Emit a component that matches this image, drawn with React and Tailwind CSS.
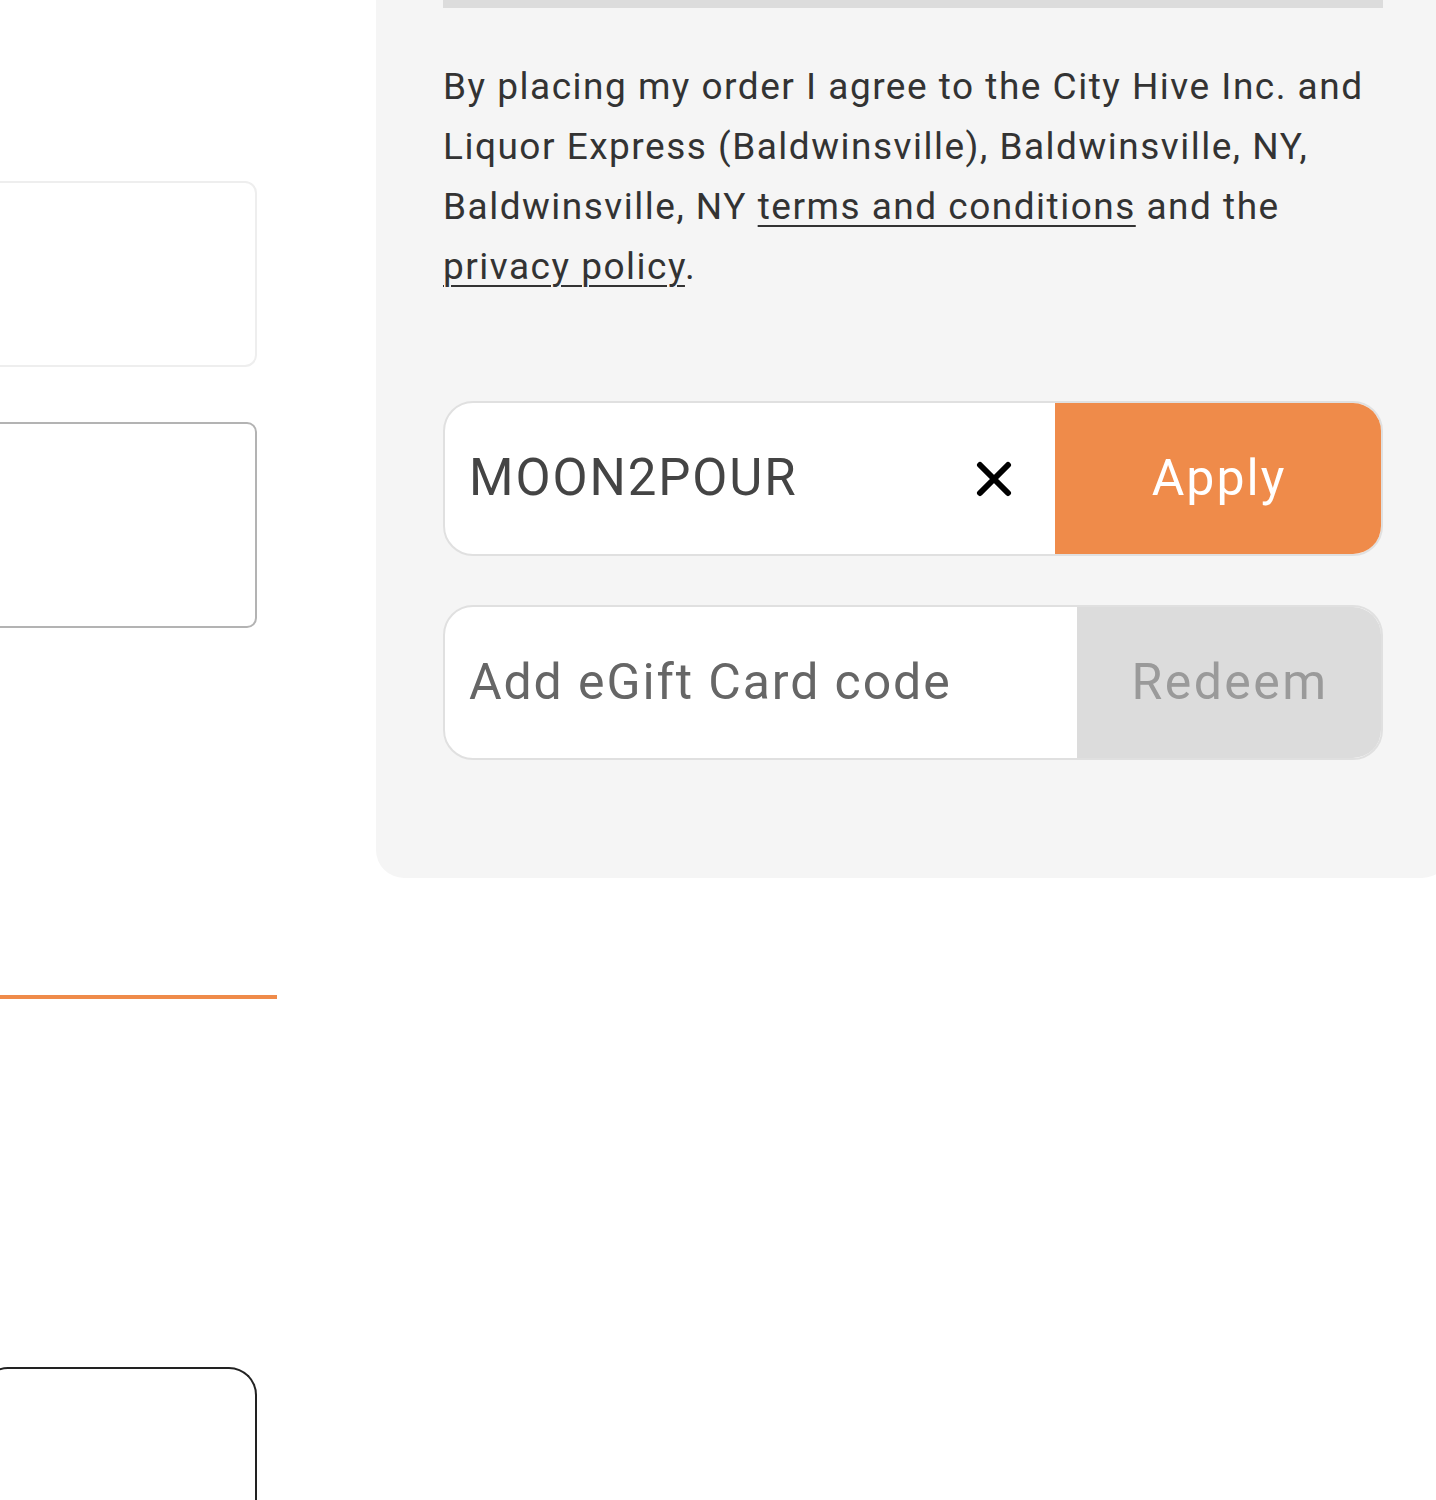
export default function App() {
  return (
    <div
      className="flex items-start w-[1436px] h-[1500px] overflow-hidden bg-white"
      style={{ fontFamily: 'Roboto, "Liberation Sans", sans-serif' }}
    >
      {/* left form column (cut off) */}
      <div className="w-[277px] shrink-0 flex flex-col">
        <div className="mt-[181px] ml-[-20px] w-[277px] h-[186px] rounded-[12px] border-2 border-[#eeeeee] bg-white" />
        <div className="mt-[55px] ml-[-20px] w-[277px] h-[206px] rounded-[10px] border-2 border-[#b3b3b3] bg-white" />
        <div className="mt-[367px] w-[277px] h-[4px] bg-[#ef8b4a]" />
        <div className="mt-[368px] ml-[-20px] w-[277px] h-[200px] rounded-t-[28px] border-2 border-b-0 border-[#222222] bg-white" />
      </div>

      {/* order summary panel */}
      <div className="ml-[99px] w-[1074px] shrink-0 bg-[#f5f5f5] rounded-b-[28px] px-[67px] pb-[118px]">
        <div className="h-[8px] bg-[#dcdcdc]" />

        <p className="mt-[49px] text-[37px] leading-[60px] tracking-[1.5px] text-[#333333]">
          By placing my order I agree to the City Hive Inc. and Liquor Express (Baldwinsville), Baldwinsville, NY,
          Baldwinsville, NY{' '}
          <a href="#" className="underline underline-offset-[6px] decoration-2">
            terms and conditions
          </a>{' '}
          and the{' '}
          <a href="#" className="underline underline-offset-[6px] decoration-2">
            privacy policy
          </a>
          .
        </p>

        <div className="mt-[104px] flex h-[155px] rounded-[30px] border-2 border-[#e0e0e0] bg-white overflow-hidden">
          <div className="flex-1 flex items-center pl-[24px] pr-[43px]">
            <span className="flex-1 text-[51px] tracking-[1.9px] text-[#444444]">MOON2POUR</span>
            <svg width="36" height="36" viewBox="0 0 36 36" className="shrink-0">
              <path d="M4 4 L32 32 M32 4 L4 32" stroke="#000" strokeWidth="6" strokeLinecap="round" />
            </svg>
          </div>
          <button className="w-[328px] -my-[2px] -mr-[2px] bg-[#ef8b4a] text-white text-[50px] tracking-[2px] flex items-center justify-center">
            Apply
          </button>
        </div>

        <div className="mt-[49px] flex h-[155px] rounded-[30px] border-2 border-[#e0e0e0] bg-white overflow-hidden">
          <div className="flex-1 flex items-center pl-[24px]">
            <span className="text-[50px] tracking-[1.9px] text-[#666666]">Add eGift Card code</span>
          </div>
          <button className="w-[306px] -my-[2px] -mr-[2px] bg-[#dcdcdc] text-[#9a9a9a] text-[50px] tracking-[2.4px] flex items-center justify-center">
            Redeem
          </button>
        </div>
      </div>
    </div>
  )
}
